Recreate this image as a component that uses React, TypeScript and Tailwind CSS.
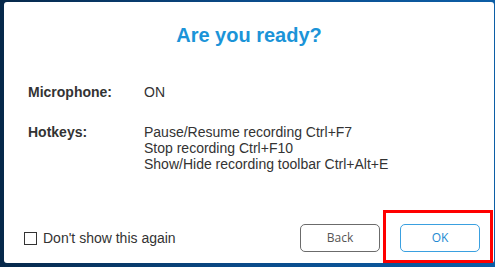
import React from "react";

export default function App() {
  return (
    <div className="relative w-[495px] h-[267px] overflow-hidden bg-[linear-gradient(90deg,#06284a_0%,#0a4b8a_50%,#0c5ea6_100%)]">
      <div className="ml-[4px] mt-[2px] w-[490px] h-[261px] bg-white rounded-[3px] flex flex-col font-['Liberation_Sans',Arial,sans-serif]">
        <div className="mt-[22px] text-center text-[20px] leading-[23px] font-bold text-[#1b94d8]">
          Are you ready?
        </div>
        <div className="mt-[37px] pl-[24px] flex text-[14px] leading-[16px] text-[#333]">
          <div className="w-[116px] font-bold">Microphone:</div>
          <div>ON</div>
        </div>
        <div className="mt-[24px] pl-[24px] flex text-[14px] leading-[16px] text-[#333]">
          <div className="w-[116px] font-bold">Hotkeys:</div>
          <div className="flex flex-col">
            <span>Pause/Resume recording Ctrl+F7</span>
            <span>Stop recording Ctrl+F10</span>
            <span>Show/Hide recording toolbar Ctrl+Alt+E</span>
          </div>
        </div>
        <div className="mt-auto mb-[11px] pl-[20px] pr-[14px] flex items-center">
          <div className="flex items-center gap-[6px] text-[14px] leading-[16px] text-[#333]">
            <div className="w-[13px] h-[13px] border border-[#333] bg-white" />
            <span>Don't show this again</span>
          </div>
          <div className="ml-auto flex gap-[20px] font-['Open_Sans',sans-serif] text-[12px]">
            <button className="w-[80px] h-[28px] rounded-[5px] border border-[#6b6b6b] text-[#555] bg-white">
              Back
            </button>
            <button className="w-[80px] h-[28px] rounded-[5px] border border-[#3aa0e0] text-[#1e8ad2] bg-white">
              OK
            </button>
          </div>
        </div>
      </div>
      <div className="absolute left-[383px] top-[210px] w-[110px] h-[53px] border-[3px] border-[#ff0000]" />
    </div>
  );
}
